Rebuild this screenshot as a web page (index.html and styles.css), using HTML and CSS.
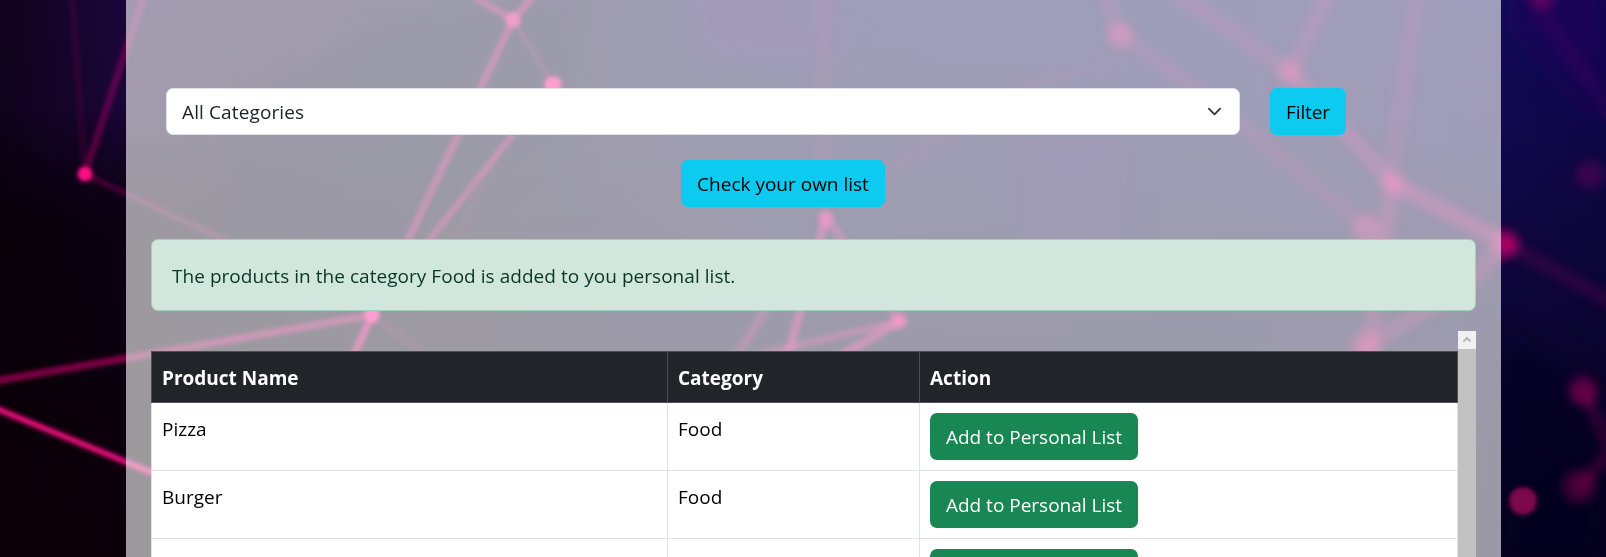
FILE: index.html
```html
<!DOCTYPE html>
<html lang="en">
<head>
<meta charset="utf-8">
<title>Products</title>
<link rel="stylesheet" href="styles.css">
</head>
<body>
<svg class="backdrop" viewBox="0 0 1606 557" preserveAspectRatio="none" aria-hidden="true">
  <defs>
    <linearGradient id="sky" x1="0" y1="0" x2="1" y2="0">
      <stop offset="0" stop-color="#10021c"/>
      <stop offset=".07" stop-color="#1a0638"/>
      <stop offset=".28" stop-color="#100c30"/>
      <stop offset=".5" stop-color="#120c4c"/>
      <stop offset=".75" stop-color="#0d0b50"/>
      <stop offset=".93" stop-color="#140a58"/>
      <stop offset="1" stop-color="#10084e"/>
    </linearGradient>
    <linearGradient id="shade" x1="0" y1="0" x2="0" y2="1">
      <stop offset="0" stop-color="#050008" stop-opacity="0"/>
      <stop offset=".2" stop-color="#050008" stop-opacity=".1"/>
      <stop offset=".6" stop-color="#050012" stop-opacity=".5"/>
      <stop offset="1" stop-color="#060014" stop-opacity=".85"/>
    </linearGradient>
    <linearGradient id="dusk" x1="0" y1="0" x2="0" y2="1">
      <stop offset=".2" stop-color="#0a0007" stop-opacity="0"/>
      <stop offset=".4" stop-color="#090009" stop-opacity=".92"/>
      <stop offset="1" stop-color="#0d0006"/>
    </linearGradient>
    <linearGradient id="fade" x1="0" y1="0" x2="1" y2="0">
      <stop offset="0" stop-color="#fff"/>
      <stop offset=".5" stop-color="#fff" stop-opacity=".5"/>
      <stop offset="1" stop-color="#fff" stop-opacity="0"/>
    </linearGradient>
    <mask id="left"><rect width="600" height="557" fill="url(#fade)"/></mask>
    <filter id="b1" filterUnits="userSpaceOnUse" x="-20" y="-20" width="1646" height="597"><feGaussianBlur stdDeviation="1.9"/></filter>
    <filter id="b3" filterUnits="userSpaceOnUse" x="-20" y="-20" width="1646" height="597"><feGaussianBlur stdDeviation="5"/></filter>
    <filter id="b20" filterUnits="userSpaceOnUse" x="-60" y="-60" width="1726" height="677"><feGaussianBlur stdDeviation="16"/></filter>
  </defs>
  <rect width="1606" height="557" fill="url(#sky)"/>
  <rect width="1606" height="557" fill="url(#shade)"/>
  <rect width="600" height="557" fill="url(#dusk)" mask="url(#left)"/>
  <g filter="url(#b20)">
    <path d="M230 100 380 20 600 -20 560 120 400 260 200 250z" fill="#080a20" opacity=".45"/>
    <path d="M680-20H860L820 60 700 60z" fill="#1a1060" opacity=".4"/>
    <path d="M1020 140H1130L1120 250H1020z" fill="#1a0f58" opacity=".3"/>
    <path d="M1510 20 1606 130V-20H1530z" fill="#260c60" opacity=".5"/>
    <path d="M1495 330 1606 400V557H1495z" fill="#020020" opacity=".6"/>
  </g>
  <g filter="url(#b1)" fill="none" stroke="#f0087e" stroke-linecap="round">
    <path d="M72-5 85 174" stroke-width="7" opacity=".1"/>
    <path d="M144-5 85 174" stroke-width="7" opacity=".32"/>
    <path d="M85 174 225 240 330 285" stroke-width="5.5" opacity=".25"/>
    <path d="M472-5 513 20" stroke-width="7" opacity=".45"/>
    <path d="M540-12 513 20 372 315" stroke-width="7" opacity=".5"/>
    <path d="M513 20 553 84" stroke-width="5" opacity=".22"/>
    <path d="M553 84 430 239 372 315" stroke-width="6" opacity=".5"/>
    <path d="M500 150 455 240" stroke-width="7" opacity=".07"/>
    <path d="M-10 382 372 315" stroke-width="7" opacity=".52"/>
    <path d="M-10 406 170 480" stroke-width="6" opacity=".98"/>
    <path d="M372 315 345 375" stroke-width="7" opacity=".75"/>
    <path d="M372 315 420 350" stroke-width="10" opacity=".1"/>
    <path d="M826 217 788 355" stroke-width="9" opacity=".5"/>
    <path d="M826 217 900 321" stroke-width="9" opacity=".35"/>
    <path d="M768 305 738 355" stroke-width="9" opacity=".28"/>
    <path d="M900 321 760 354" stroke-width="7" opacity=".36"/>
    <path d="M900 321 842 355" stroke-width="9" opacity=".5"/>
  </g>
  <g filter="url(#b1)" fill="#ff0a86">
    <circle cx="85" cy="174" r="7.5"/>
    <circle cx="513" cy="20" r="8" opacity=".7"/>
    <circle cx="553" cy="85" r="8.8"/>
    <circle cx="372" cy="315" r="7.5"/>
    <circle cx="826" cy="219" r="8" opacity=".42"/>
    <circle cx="899" cy="321" r="9" opacity=".42"/>
  </g>
  <g filter="url(#b3)" fill="none" stroke="#d80a70" stroke-linecap="round">
    <path d="M823-5V217" stroke-width="14" opacity=".11"/>
    <path d="M1105-10 1120 35 1200 92 1368 228" stroke-width="15" opacity=".17"/>
    <path d="M1180-5 1290 72" stroke-width="16" opacity=".2"/>
    <path d="M1330-10 1290 72" stroke-width="16" opacity=".2"/>
    <path d="M1290 72 1393 183" stroke-width="15" opacity=".32"/>
    <path d="M1418-10 1390 180" stroke-width="16" opacity=".15"/>
    <path d="M1393 183 1507 244" stroke-width="16" opacity=".4"/>
    <path d="M1393 183 1368 360" stroke-width="17" opacity=".28"/>
    <path d="M1507 244 1470 280 1365 348" stroke-width="17" opacity=".26"/>
    <path d="M1507 244 1616 305" stroke-width="14" opacity=".15"/>
    <path d="M1530-5 1616 120" stroke-width="15" opacity=".07"/>
    <path d="M1583 391 1612 450 1580 487" stroke-width="13" opacity=".2"/>
    <path d="M1120 60 1030 85 880 175" stroke-width="15" opacity=".06"/>
  </g>
  <g filter="url(#b3)" fill="#e00872">
    <circle cx="1120" cy="35" r="13" opacity=".45"/>
    <circle cx="1290" cy="72" r="13" opacity=".3"/>
    <circle cx="1393" cy="183" r="13" opacity=".26"/>
    <circle cx="1368" cy="229" r="15" opacity=".4"/>
    <circle cx="1505" cy="244" r="15" opacity=".4"/>
    <circle cx="1365" cy="346" r="15" opacity=".4"/>
    <circle cx="1590" cy="175" r="14" opacity=".2"/>
    <circle cx="1583" cy="391" r="15" opacity=".34"/>
    <circle cx="1579" cy="486" r="17" opacity=".24"/>
    <circle cx="1543" cy="-4" r="13" opacity=".3"/>
  </g>
  <circle cx="1523" cy="501" r="14" fill="#c80868" opacity=".62" filter="url(#b1)"/>
</svg>

<main class="panel">
  <form class="filter">
    <div class="select">All Categories
      <svg class="chevron" viewBox="0 0 16 16" aria-hidden="true"><path d="m2 5 6 6 6-6"/></svg>
    </div>
    <button class="btn btn-info btn-filter" type="button">Filter</button>
  </form>
  <div class="own"><button class="btn btn-info btn-own" type="button">Check your own list</button></div>
  <div class="alert">The products in the category Food is added to you personal list.</div>
  <section class="scroller">
    <table class="products">
      <colgroup><col class="c-name"><col class="c-cat"><col class="c-act"></colgroup>
      <thead><tr><th>Product Name</th><th>Category</th><th>Action</th></tr></thead>
      <tbody>
        <tr><td>Pizza</td><td>Food</td><td><button class="btn btn-add" type="button">Add to Personal List</button></td></tr>
        <tr><td>Burger</td><td>Food</td><td><button class="btn btn-add" type="button">Add to Personal List</button></td></tr>
        <tr><td></td><td></td><td><button class="btn btn-add" type="button"></button></td></tr>
      </tbody>
    </table>
    <div class="track"><div class="up"><svg viewBox="0 0 18 18" aria-hidden="true"><path d="M5.5 10.5 9 7l3.5 3.5"/></svg></div></div>
  </section>
</main>
</body>
</html>
```

FILE: styles.css
```css
* { box-sizing: border-box; }
html, body { height: 100%; }
body {
  margin: 0;
  overflow: hidden;
  background: #0a0220;
  color: #212529;
  font: 19px/30px "Open Sans", "Noto Sans", sans-serif;
}
.backdrop { position: absolute; inset: 0; width: 100%; height: 100%; }
.panel {
  position: relative;
  width: 1375px;
  height: 557px;
  margin-left: 126px;
  padding: 88px 25px 0;
  overflow: hidden;
  background: rgba(255, 255, 255, .6);
}
.filter { display: flex; gap: 30px; padding-left: 15px; }
.select {
  display: flex;
  align-items: center;
  justify-content: space-between;
  width: 1074px;
  height: 47px;
  padding: 0 15px;
  background: #fff;
  border: 1px solid #dee2e6;
  border-radius: 7px;
  letter-spacing: .12px;
}
.chevron { width: 15px; height: 15px; margin-right: 2px; }
.chevron path { fill: none; stroke: #343a40; stroke-width: 2; stroke-linecap: round; stroke-linejoin: round; }
.btn {
  display: block;
  height: 47px;
  padding: 0;
  border: 0;
  border-radius: 7px;
  font: inherit;
  text-align: center;
  white-space: nowrap;
}
.btn-info { background: #0dcaf0; color: #000; }
.btn-filter { width: 76px; letter-spacing: -.1px; }
.own { padding: 25px 0 0 530px; }
.btn-own { width: 204px; }
.alert {
  height: 72px;
  margin-top: 32px;
  padding: 20px;
  background: #d1e7dd;
  border: 1px solid #a3cfbb;
  border-radius: 7px;
  color: #0a3622;
  line-height: 32px;
  letter-spacing: .04px;
}
.scroller { display: flex; margin-top: 20px; height: 226px; }
.products {
  flex: none;
  width: 1307px;
  margin-top: 20px;
  table-layout: fixed;
  border-collapse: separate;
  border-spacing: 0;
  align-self: flex-start;
}
.c-name { width: 517px; }
.c-cat { width: 252px; }
.c-act { width: 538px; }
th {
  height: 52px;
  padding: 2px 10px 0;
  background: #212529;
  border: solid #4d5154;
  border-width: 1px 1px 1px 0;
  color: #fff;
  font-weight: 700;
  text-align: left;
}
td {
  height: 68px;
  padding: 10px;
  background: #fff;
  border: solid #dee2e6;
  border-width: 0 1px 1px 0;
  color: #000;
  line-height: 32px;
  vertical-align: top;
}
th:first-child, td:first-child { border-left-width: 1px; }
.btn-add { width: 208px; padding-top: 1px; background: #198754; color: #fff; }
.track { width: 18px; background: #c1c1c1; }
.up { height: 18px; background: #f1f1f1; }
.up svg { display: block; width: 18px; height: 18px; }
.up path { fill: none; stroke: #b5b5b5; stroke-width: 2; }
```
